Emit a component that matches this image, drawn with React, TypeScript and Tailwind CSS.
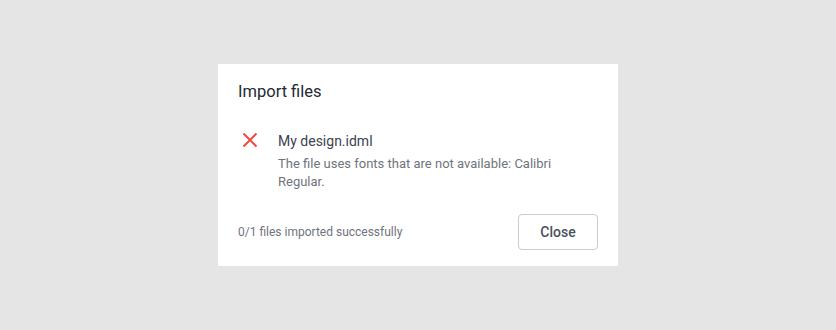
export default function App() {
  return (
    <div
      className="min-h-screen w-full bg-[#e5e5e5] flex items-center justify-center"
      style={{ fontFamily: "Roboto, 'Noto Sans', sans-serif" }}
    >
      <div className="w-[400px] bg-white px-5 pt-4 pb-4">
        <h2 className="text-[16.5px] leading-6 font-normal text-[#212934]">Import files</h2>

        <div className="mt-[27px] flex">
          <div className="w-10 flex justify-start pl-[4px] pt-[1px]">
            <svg width="16" height="16" viewBox="0 0 16 16" fill="none">
              <path d="M1.5 1.5L14.5 14.5M14.5 1.5L1.5 14.5" stroke="#ef4c40" strokeWidth="2" />
            </svg>
          </div>
          <div className="flex-1">
            <div className="text-[14px] leading-5 text-[#3b4450]">My design.idml</div>
            <p className="mt-1 text-[13px] leading-[18px] text-[#6f747c]">
              The file uses fonts that are not available: Calibri Regular.
            </p>
          </div>
        </div>

        <div className="mt-[23px] flex items-center justify-between">
          <span className="text-[12px] leading-4 text-[#6f747c]">0/1 files imported successfully</span>
          <button className="w-20 h-9 rounded border border-[#c9cdd3] text-[14px] font-medium text-[#4a525c]">
            Close
          </button>
        </div>
      </div>
    </div>
  );
}
